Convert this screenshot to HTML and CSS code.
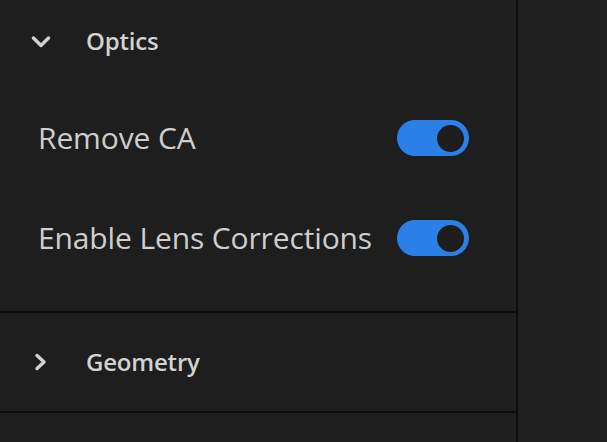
FILE: index.html
```html
<!DOCTYPE html>
<html>
<head>
<meta charset="utf-8">
<link rel="stylesheet" href="styles.css">
</head>
<body>
<div class="app">
  <div class="panel">
    <section class="section open">
      <div class="header">
        <span class="chev">
          <svg width="20" height="12" viewBox="0 0 20 12"><path d="M2.5 2 L10 9.5 L17.5 2" fill="none" stroke="#d2d2d2" stroke-width="3.4" stroke-linecap="round" stroke-linejoin="round"/></svg>
        </span>
        <span class="title">Optics</span>
      </div>
      <div class="row">
        <span class="label">Remove CA</span>
        <span class="toggle on"><span class="knob"></span></span>
      </div>
      <div class="row">
        <span class="label">Enable Lens Corrections</span>
        <span class="toggle on"><span class="knob"></span></span>
      </div>
    </section>
    <section class="section closed">
      <div class="header">
        <span class="chev">
          <svg width="20" height="18" viewBox="0 0 20 18"><path d="M6 2.5 L13 9 L6 15.5" fill="none" stroke="#d2d2d2" stroke-width="3.4" stroke-linecap="round" stroke-linejoin="round"/></svg>
        </span>
        <span class="title">Geometry</span>
      </div>
    </section>
    <section class="section rest"></section>
  </div>
  <div class="side"></div>
</div>
</body>
</html>
```

FILE: styles.css
```css
html, body {
  margin: 0;
  padding: 0;
  height: 100%;
  background: #1e1e1e;
  overflow: hidden;
}
.app {
  display: flex;
  height: 100%;
}
.panel {
  width: 516px;
  border-right: 2px solid #0b0b0b;
  display: flex;
  flex-direction: column;
  font-family: "Open Sans", "Noto Sans", sans-serif;
}
.side {
  flex: 1;
  background: #1f1f1f;
}
.section {
  border-bottom: 2px solid #0b0b0b;
}
.section.open {
  height: 311px;
}
.section.rest {
  border-bottom: none;
  flex: 1;
}
.header {
  display: flex;
  align-items: center;
  padding-left: 31px;
  gap: 35px;
}
.open .header {
  height: 84px;
  margin-bottom: 4px;
}
.closed .header { height: 98px; }
.chev {
  width: 20px;
  display: flex;
  justify-content: center;
}
.chev svg { display: block; }
.title {
  font-size: 24px;
  font-weight: 600;
  color: #d2d2d2;
  letter-spacing: -0.2px;
  padding-bottom: 3px;
}
.closed .title { padding-bottom: 1px; }
.row {
  display: flex;
  align-items: center;
  justify-content: space-between;
  height: 100px;
  padding-left: 38px;
  padding-right: 47px;
}
.label {
  font-size: 30px;
  color: #cecece;
  letter-spacing: -0.13px;
  padding-bottom: 2px;
}
.toggle {
  width: 72px;
  height: 36px;
  border-radius: 18px;
  background: #2b80e8;
  display: flex;
  align-items: center;
  justify-content: flex-end;
  padding-right: 5px;
  box-sizing: border-box;
}
.knob {
  width: 27px;
  height: 27px;
  border-radius: 50%;
  background: #1d1d1d;
}
```
